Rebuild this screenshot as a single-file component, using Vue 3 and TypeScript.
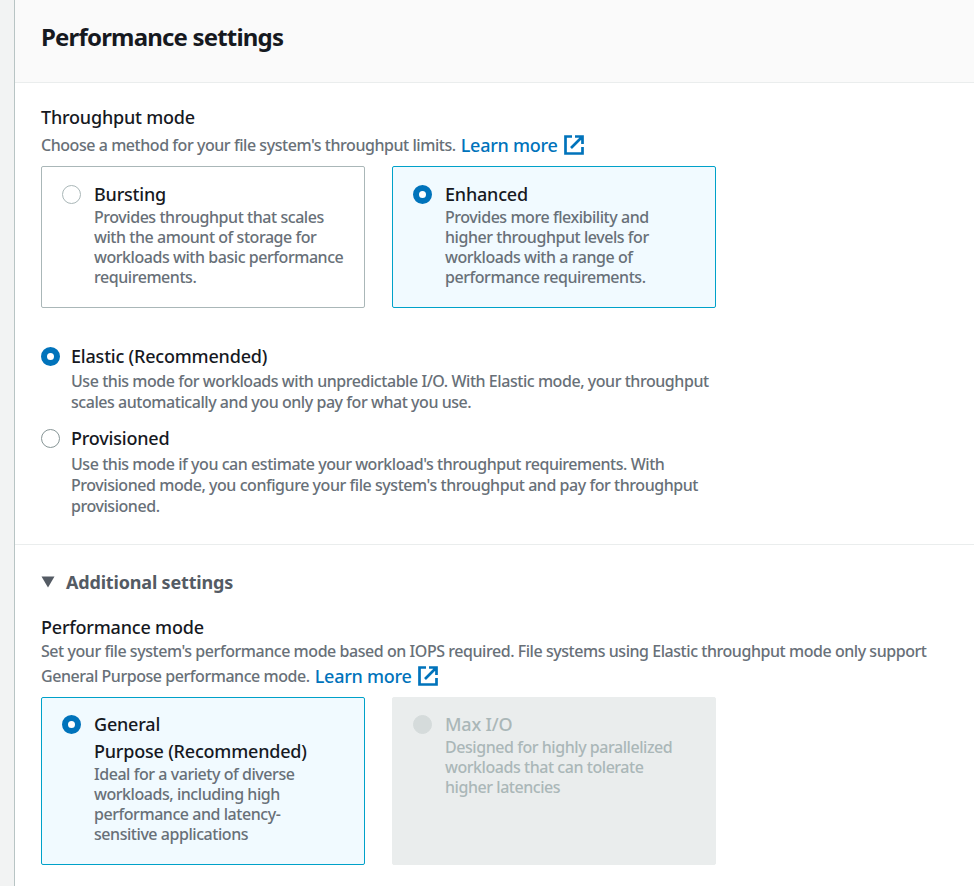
<script setup lang="ts">
interface Tile {
  title: string[]
  lines: string[]
  state: 'on' | 'off' | 'disabled'
}

const throughputTiles: Tile[] = [
  {
    title: ['Bursting'],
    lines: ['Provides throughput that scales', 'with the amount of storage for', 'workloads with basic performance', 'requirements.'],
    state: 'off',
  },
  {
    title: ['Enhanced'],
    lines: ['Provides more flexibility and', 'higher throughput levels for', 'workloads with a range of', 'performance requirements.'],
    state: 'on',
  },
]

const modes: Tile[] = [
  {
    title: ['Elastic (Recommended)'],
    lines: ['Use this mode for workloads with unpredictable I/O. With Elastic mode, your throughput', 'scales automatically and you only pay for what you use.'],
    state: 'on',
  },
  {
    title: ['Provisioned'],
    lines: ["Use this mode if you can estimate your workload's throughput requirements. With", "Provisioned mode, you configure your file system's throughput and pay for throughput", 'provisioned.'],
    state: 'off',
  },
]

const performanceTiles: Tile[] = [
  {
    title: ['General', 'Purpose (Recommended)'],
    lines: ['Ideal for a variety of diverse', 'workloads, including high', 'performance and latency-', 'sensitive applications'],
    state: 'on',
  },
  {
    title: ['Max I/O'],
    lines: ['Designed for highly parallelized', 'workloads that can tolerate', 'higher latencies'],
    state: 'disabled',
  },
]
</script>

<template>
  <div class="page">
    <main class="panel">
      <header class="head"><h2>Performance settings</h2></header>

      <section class="body throughput">
        <h3 class="label">Throughput mode</h3>
        <p class="hint">
          <span>Choose a method for your file system's throughput limits.</span>
          <a class="link">Learn more
            <svg class="ext" viewBox="0 0 20 20"><path d="M8 1.5H1.5V18.5H18.5V12M11 1.5H18.5V9M18 2L7 13" /></svg>
          </a>
        </p>
        <div class="tiles">
          <div v-for="t in throughputTiles" :key="t.title[0]" class="tile" :class="t.state">
            <i class="radio" :class="t.state" />
            <div>
              <div class="name"><span v-for="n in t.title" :key="n">{{ n }}</span></div>
              <div class="desc"><span v-for="l in t.lines" :key="l">{{ l }}</span></div>
            </div>
          </div>
        </div>
        <div class="modes">
          <div v-for="m in modes" :key="m.title[0]" class="mode">
            <i class="radio" :class="m.state" />
            <div>
              <div class="name"><span v-for="n in m.title" :key="n">{{ n }}</span></div>
              <div class="desc"><span v-for="l in m.lines" :key="l">{{ l }}</span></div>
            </div>
          </div>
        </div>
      </section>

      <section class="body additional">
        <h3 class="expander">
          <svg viewBox="0 0 14 12"><path d="M0.5 0.5H13.5L7 11.5Z" /></svg>
          <span>Additional settings</span>
        </h3>
        <h3 class="label">Performance mode</h3>
        <p class="hint first"><span>Set your file system's performance mode based on IOPS required. File systems using Elastic throughput mode only support</span></p>
        <p class="hint">
          <span>General Purpose performance mode.</span>
          <a class="link">Learn more
            <svg class="ext" viewBox="0 0 20 20"><path d="M8 1.5H1.5V18.5H18.5V12M11 1.5H18.5V9M18 2L7 13" /></svg>
          </a>
        </p>
        <div class="tiles tall">
          <div v-for="t in performanceTiles" :key="t.title[0]" class="tile" :class="t.state">
            <i class="radio" :class="t.state" />
            <div>
              <div class="name"><span v-for="n in t.title" :key="n">{{ n }}</span></div>
              <div class="desc"><span v-for="l in t.lines" :key="l">{{ l }}</span></div>
            </div>
          </div>
        </div>
      </section>
    </main>
  </div>
</template>

<style>
body { margin: 0; background: #fff; }
</style>

<style scoped>
* { box-sizing: border-box; }
.page {
  width: 974px;
  height: 886px;
  padding-left: 14px;
  overflow: hidden;
  background: #f2f3f3;
  font-family: "Noto Sans", "Open Sans", sans-serif;
  font-size: 16px;
  font-weight: 500;
  color: #16191f;
  white-space: nowrap;
}
.panel { height: 886px; background: #fff; border-left: 1px solid #b8c4c4; }
h2, h3, p { margin: 0; }
.head { height: 83px; padding: 19px 26px 0; background: #fafafa; border-bottom: 1px solid #eaeded; }
h2 { font-size: 24px; line-height: 36px; font-weight: 700; letter-spacing: -0.82px; }
.body { padding: 0 26px; }
.throughput { height: 462px; padding-top: 21px; border-bottom: 1px solid #eaeded; }
.label { font-size: 18px; line-height: 26px; font-weight: 500; letter-spacing: -0.2px; }
.hint { display: flex; align-items: center; height: 25px; gap: 5px; color: #687078; letter-spacing: -0.45px; }
.throughput .hint { margin-top: 2px; }
.link { display: flex; align-items: center; gap: 6px; font-size: 18px; letter-spacing: -0.25px; color: #0073bb; }
.ext { width: 20px; height: 20px; fill: none; stroke: #0073bb; stroke-width: 2.7; }
.tiles { display: grid; grid-template-columns: 324px 324px; gap: 27px; height: 142px; margin-top: 9px; }
.tile { display: flex; gap: 13px; padding: 14px 20px; border: 1px solid #aab7b8; border-radius: 2px; }
.tile.on { background: #f1faff; border-color: #00a1c9; }
.tile.disabled { background: #eaeded; border-color: #eaeded; color: #aab7b8; }
.tile.disabled .desc { color: #aab7b8; }
.radio { flex: none; width: 19px; height: 19px; margin-top: 4px; border: 1px solid #879596; border-radius: 50%; background: #fff; }
.tile .radio.off { border-color: #aab7b8; }
.radio.on { border: 6px solid #0073bb; }
.radio.disabled { border-color: #d5dbdb; background: #d5dbdb; }
.name { font-size: 18px; line-height: 26px; letter-spacing: -0.2px; }
.name span, .desc span { display: block; }
.name span + span { margin-top: 1px; }
.desc { color: #687078; line-height: 20px; letter-spacing: -0.45px; }
.modes { padding-top: 35px; }
.mode { display: flex; gap: 11px; }
.mode + .mode { margin-top: 12px; }
.mode .desc { padding-top: 2px; line-height: 21px; }
.mode + .mode .desc { padding-top: 3px; }
.additional { padding-top: 23px; }
.expander { display: flex; align-items: center; gap: 11px; height: 28px; font-size: 18px; color: #545b64; letter-spacing: -0.18px; }
.expander svg { width: 14px; height: 12px; fill: #545b64; }
.additional .label { margin-top: 18px; }
.additional .hint.first { margin-top: -2px; }
.tiles.tall { height: 168px; }
.tall .tile { padding-top: 13px; }
</style>
